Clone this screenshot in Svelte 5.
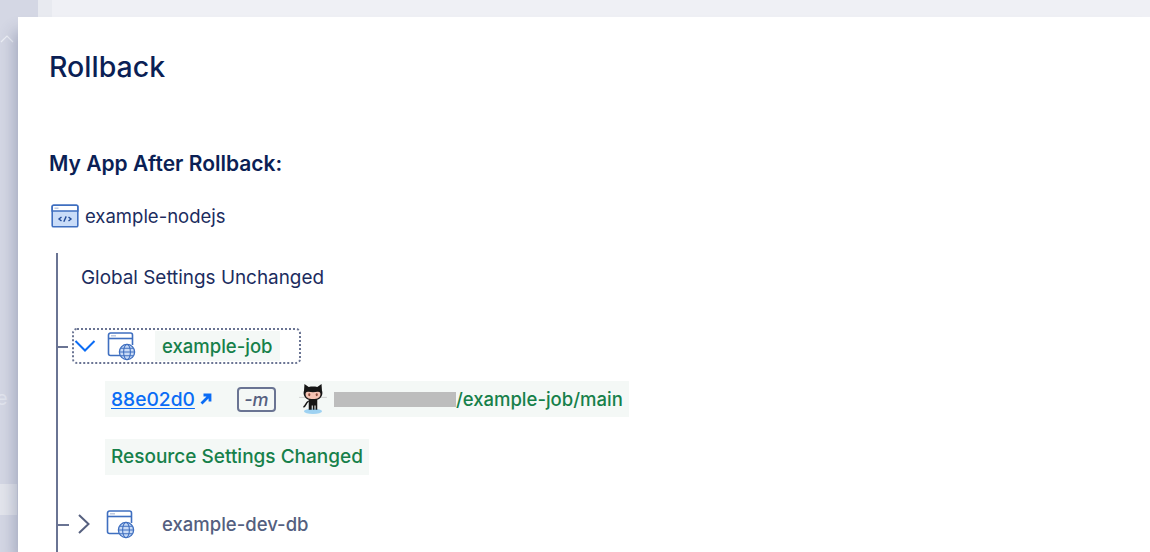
<script>
</script>

{#snippet appIcon()}
  <svg class="app-icon" width="30" height="30" viewBox="0 0 30 30" fill="none">
    <path d="M15 24.500H4.500a2 2 0 0 1-2-2V4a2 2 0 0 1 2-2h20a2 2 0 0 1 2 2v10" stroke="#3f6fc0" stroke-width="1.600"/>
    <path d="M2.500 7.500h24" stroke="#3f6fc0" stroke-width="1.600"/>
    <path d="M5 4.800h5" stroke="#b9c6de" stroke-width="1.400"/>
    <circle cx="21" cy="21" r="7.600" fill="#c9dbf6" stroke="#3f6fc0" stroke-width="1.300"/>
    <ellipse cx="21" cy="21" rx="3.400" ry="7.600" stroke="#3f6fc0" stroke-width="1.100"/>
    <path d="M13.400 21h15.200M14.600 17.200h12.800M14.600 24.800h12.800" stroke="#3f6fc0" stroke-width="1.100"/>
  </svg>
{/snippet}

<div class="page">
  <div class="backdrop">
    <div class="side">
      <svg class="up" width="14" height="8" viewBox="0 0 14 8" fill="none"><path d="M1 7l6-6 6 6" stroke="#eef0f6" stroke-width="1.200"/></svg>
      <span class="side-e">e</span>
      <span class="side-v">v</span>
    </div>
    <div class="strip"></div>
    <div class="top"></div>
  </div>

  <div class="modal">
    <h1>Rollback</h1>
    <h2>My App After Rollback:</h2>

    <div class="app-row">
      <svg width="28" height="24" viewBox="0 0 28 24" fill="none">
        <rect x="1.200" y="1.200" width="25.600" height="21.600" rx="1.400" fill="#c9dcf8" stroke="#3f6fc0" stroke-width="1.600"/>
        <path d="M1.200 2.600a1.400 1.400 0 0 1 1.400-1.400h22.800a1.400 1.400 0 0 1 1.400 1.400v4.400H1.200z" fill="#fff" stroke="#3f6fc0" stroke-width="1.600"/>
        <path d="M3.500 4.200h4" stroke="#b9c6de" stroke-width="1.400"/>
        <path d="M10.500 13l-2.500 2 2.500 2M17.500 13l2.500 2-2.500 2M15.200 12.400l-2.400 5.400" stroke="#234c99" stroke-width="1.400"/>
      </svg>
      <span>example-nodejs</span>
    </div>

    <div class="tree">
      <p class="global">Global Settings Unchanged</p>

      <div class="component open">
        <span class="tick"></span>
        <div class="focus">
          <svg class="chev" width="22" height="14" viewBox="0 0 22 14" fill="none"><path d="M1.500 2l9.500 9.500L20.500 2" stroke="#0a6cf5" stroke-width="2"/></svg>
          {@render appIcon()}
          <span class="name changed">example-job</span>
        </div>
      </div>

      <div class="source changed-bg">
        <a href="#commit">88e02d0</a>
        <svg class="arrow" width="12" height="12" viewBox="0 0 12 12" fill="none"><path d="M1.500 10.500L9 3M3.500 2h6.500v6.500" stroke="#0a6cf5" stroke-width="2.800"/></svg>
        <span class="flag">-m</span>
        <svg class="octo" width="28" height="32" viewBox="0 0 26 30" fill="none">
          <ellipse cx="13" cy="26.500" rx="8.500" ry="2.500" fill="#9ed2f2"/>
          <path d="M0 13.500h6M20 13.500h6" stroke="#c8c8c8" stroke-width="0.800"/>
          <path d="M5 1l4 2.800c2.600-.6 5.400-.6 8 0L21 1l.4 6c1.400 4-1 7.600-4.400 8.600V25h-1.600v-4h-1v4h-1.600v-4h-1v4H9v-9.400C5.600 14.600 3.200 11 4.600 7z" fill="#161616"/>
          <path d="M6 10.500c0-1.700 1.300-2.400 2.600-2.200 2.900.4 5.900.4 8.800 0 1.300-.2 2.600.5 2.600 2.200 0 3-2.600 4.500-7 4.500s-7-1.500-7-4.500z" fill="#f5c4b4"/>
          <ellipse cx="9.500" cy="11" rx="1" ry="1.400" fill="#8a4a3a"/>
          <ellipse cx="16.500" cy="11" rx="1" ry="1.400" fill="#8a4a3a"/>
          <path d="M9 17c-3 1-2.500 5-5 5.500" stroke="#161616" stroke-width="1.400"/>
        </svg>
        <span class="redacted"></span><span class="repo">/example-job/main</span>
      </div>

      <div class="resource changed-bg">Resource Settings Changed</div>

      <div class="component closed">
        <span class="tick"></span>
        <svg class="chev" width="14" height="22" viewBox="0 0 14 22" fill="none"><path d="M2 2l9.500 9L2 20" stroke="#56607f" stroke-width="2"/></svg>
        {@render appIcon()}
        <span class="name">example-dev-db</span>
      </div>
    </div>
  </div>
</div>

<style>
  :global(body) {
    margin: 0;
    background: #fff;
  }

  .page {
    width: 1150px;
    height: 552px;
    position: relative;
    overflow: hidden;
    font-family: Inter, "Open Sans", sans-serif;
    color: #0b1f55;
  }

  .backdrop {
    display: flex;
    height: 100%;
    background: #eff0f5;
  }

  .side {
    width: 38px;
    height: 100%;
    position: relative;
    color: #e2e5ee;
    background: #d4d7e4;
    flex: none;
  }

  .up {
    position: absolute;
    left: 0;
    top: 35px;
  }

  .side-e {
    position: absolute;
    left: -4px;
    top: 386px;
    font-size: 20px;
  }

  .side-v {
    position: absolute;
    left: -1px;
    top: 484px;
    width: 18px;
    height: 31px;
    background: #e3e5ec;
    text-align: right;
    font-size: 18px;
    line-height: 30px;
  }

  .strip {
    width: 14px;
    background: #e8eaf0;
    flex: none;
  }

  .top {
    flex: 1;
  }

  .modal {
    position: absolute;
    left: 18px;
    top: 17px;
    right: 0;
    bottom: 0;
    background: #fff;
    padding: 32px 0 0 31px;
    box-shadow: -6px 12px 14px -2px rgba(60, 70, 110, 0.3);
  }

  h1 {
    margin: 0;
    font-size: 28.5px;
    line-height: 36px;
    font-weight: 500;
  }

  h2 {
    margin: 64px 0 0;
    font-size: 21px;
    line-height: 30px;
    font-weight: 600;
  }

  .app-row {
    display: flex;
    align-items: center;
    gap: 6px;
    margin: 25px 0 0 2px;
    font-size: 18.5px;
    line-height: 24px;
    color: #1b2c5e;
  }

  .tree {
    margin: 25px 0 0 7px;
    border-left: 2px solid #6a7493;
    padding: 12px 0 0 23px;
    height: 300px;
  }

  .global {
    margin: 0;
    font-size: 18.9px;
    line-height: 26px;
    color: #1b2c5e;
  }

  .component {
    display: flex;
    align-items: center;
    position: relative;
    font-size: 18.5px;
  }

  .tick {
    position: absolute;
    left: -23px;
    top: 50%;
    width: 11px;
    height: 2px;
    background: #6a7493;
  }

  .open {
    margin: 37px 0 0 -9px;
  }

  .open .tick {
    left: -14px;
    width: 10px;
  }

  .focus {
    display: flex;
    align-items: center;
    width: 225px;
    height: 32px;
    border: 2px dotted #6a7493;
    border-radius: 5px;
  }

  .open .app-icon {
    margin-left: 10px;
  }

  .name {
    margin-left: 27px;
    color: #545f80;
    font-weight: 500;
    line-height: 30px;
  }

  .name.changed {
    margin-left: 19px;
    padding: 0 7px;
    background: #f4f8f6;
    color: #16804a;
  }

  .changed-bg {
    background: #f4f8f6;
    color: #16804a;
    font-weight: 500;
    font-size: 18.5px;
  }

  .source {
    display: inline-flex;
    align-items: center;
    height: 36px;
    margin: 17px 0 0 24px;
    padding: 0 6px;
  }

  .source a {
    color: #0a6cf5;
    font-size: 19.2px;
    text-decoration: underline;
    text-underline-offset: 2px;
  }

  .arrow {
    margin-left: 5px;
  }

  .flag {
    margin-left: 25px;
    width: 39px;
    height: 25px;
    border: 2px solid #6a7493;
    border-radius: 4px;
    text-align: center;
    font-style: italic;
    font-size: 18px;
    line-height: 21px;
    color: #56607f;
    box-sizing: border-box;
  }

  .octo {
    margin-left: 23px;
  }

  .redacted {
    width: 122px;
    height: 15px;
    margin-left: 7px;
    background: #bdbdbd;
  }

  .resource {
    width: fit-content;
    height: 36px;
    line-height: 36px;
    margin: 22px 0 0 24px;
    padding: 0 6px;
    font-size: 19px;
  }

  .closed {
    margin: 34px 0 0 -23px;
    padding-left: 19px;
  }

  .closed .tick {
    left: 0;
  }

  .closed .app-icon {
    margin-left: 14px;
  }
</style>
